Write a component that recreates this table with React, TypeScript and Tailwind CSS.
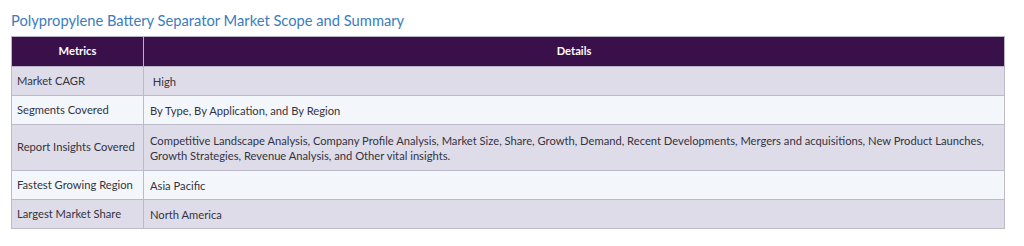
const rows = [
  { metric: 'Market CAGR', detail: '\u00a0High', tall: false },
  { metric: 'Segments Covered', detail: 'By Type, By Application, and By Region', tall: false },
  {
    metric: 'Report Insights Covered',
    detail:
      'Competitive Landscape Analysis, Company Profile Analysis, Market Size, Share, Growth, Demand, Recent Developments, Mergers and acquisitions, New Product Launches, Growth Strategies, Revenue Analysis, and Other vital insights.',
    tall: true,
  },
  { metric: 'Fastest Growing Region', detail: 'Asia Pacific', tall: false },
  { metric: 'Largest Market Share', detail: 'North America', tall: false },
];

export default function App() {
  return (
    <div className="w-[1024px] h-[246px] bg-white pl-[11px] pt-[10px] font-['Lato','Open_Sans',sans-serif]">
      {/* Title */}
      <h2 className="text-[14.7px] leading-[20px] text-[#3a7cc0]">
        Polypropylene Battery Separator Market Scope and Summary
      </h2>

      {/* Table */}
      <table className="mt-[6px] w-[994px] border-collapse text-[11.2px] text-[#333340]">
        <thead>
          <tr className="h-[30px] bg-[#3a104a] text-white">
            <th className="w-[132px] border border-[#b9b3c6] font-bold text-center">Metrics</th>
            <th className="border border-[#b9b3c6] font-bold text-center">Details</th>
          </tr>
        </thead>
        <tbody>
          {rows.map((r, i) => (
            <tr
              key={r.metric}
              className={`${r.tall ? 'h-[46px]' : 'h-[29px]'} ${i % 2 === 0 ? 'bg-[#dfdcea]' : 'bg-[#f3f7fb]'}`}
            >
              <td className="border border-[#bcbac8] pl-[5px] pr-[2px] align-middle whitespace-nowrap">
                {r.metric}
              </td>
              <td className="border border-[#bcbac8] pl-[6px] pr-[10px] align-middle leading-[15px]">
                {r.detail}
              </td>
            </tr>
          ))}
        </tbody>
      </table>
    </div>
  );
}
